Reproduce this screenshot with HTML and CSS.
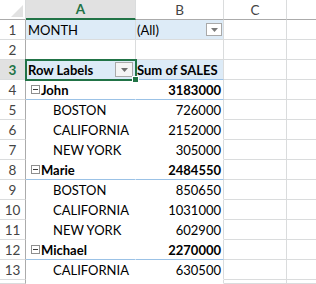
FILE: index.html
```html
<!DOCTYPE html>
<html lang="en">
<head>
    <meta charset="UTF-8">
    <meta name="viewport" content="width=device-width, initial-scale=1.0">
    <title>Pivot Table - Sales by Month</title>
    <link rel="stylesheet" href="styles.css">
</head>
<body>
    <div class="sheet">
        <!-- column headers -->
        <div class="cell corner"><span class="tri"></span></div>
        <div class="cell ch sel">A</div>
        <div class="cell ch">B</div>
        <div class="cell ch">C</div>
        <div class="cell ch last"></div>

        <!-- row 1: report filter -->
        <div class="cell rh">1</div>
        <div class="cell pv-head">MONTH</div>
        <div class="cell pv-head colb">(All)
            <span class="dd small"><svg width="7" height="4" viewBox="0 0 7 4"><path d="M0 0h7L3.5 4z" fill="#7a7a7a"/></svg></span>
        </div>
        <div class="cell"></div>
        <div class="cell last"></div>

        <!-- row 2 -->
        <div class="cell rh">2</div>
        <div class="cell"></div>
        <div class="cell"></div>
        <div class="cell"></div>
        <div class="cell last"></div>

        <!-- row 3: pivot header -->
        <div class="cell rh rh-sel">3</div>
        <div class="cell pv-head pv-title active"><b>Row Labels</b>
            <span class="dd"><svg width="7" height="4" viewBox="0 0 7 4"><path d="M0 0h7L3.5 4z" fill="#6d6d6d"/></svg></span>
        </div>
        <div class="cell pv-head pv-title colb"><b>Sum of SALES</b></div>
        <div class="cell"></div>
        <div class="cell last"></div>

        <!-- John -->
        <div class="cell rh">4</div>
        <div class="cell pv-a sub"><span class="tog"><svg width="9" height="9" viewBox="0 0 9 9"><rect x="0.5" y="0.5" width="8" height="8" fill="#fff" stroke="#8f8f8f"/><path d="M2 4.5h5" stroke="#3a3a3a"/></svg></span><b>John</b></div>
        <div class="cell pv-b sub num"><b>3183000</b></div>
        <div class="cell"></div>
        <div class="cell last"></div>

        <div class="cell rh">5</div>
        <div class="cell pv-a child">BOSTON</div>
        <div class="cell pv-b num">726000</div>
        <div class="cell"></div>
        <div class="cell last"></div>

        <div class="cell rh">6</div>
        <div class="cell pv-a child">CALIFORNIA</div>
        <div class="cell pv-b num">2152000</div>
        <div class="cell"></div>
        <div class="cell last"></div>

        <div class="cell rh">7</div>
        <div class="cell pv-a child">NEW YORK</div>
        <div class="cell pv-b num">305000</div>
        <div class="cell"></div>
        <div class="cell last"></div>

        <!-- Marie -->
        <div class="cell rh">8</div>
        <div class="cell pv-a sub"><span class="tog"><svg width="9" height="9" viewBox="0 0 9 9"><rect x="0.5" y="0.5" width="8" height="8" fill="#fff" stroke="#8f8f8f"/><path d="M2 4.5h5" stroke="#3a3a3a"/></svg></span><b>Marie</b></div>
        <div class="cell pv-b sub num"><b>2484550</b></div>
        <div class="cell"></div>
        <div class="cell last"></div>

        <div class="cell rh">9</div>
        <div class="cell pv-a child">BOSTON</div>
        <div class="cell pv-b num">850650</div>
        <div class="cell"></div>
        <div class="cell last"></div>

        <div class="cell rh">10</div>
        <div class="cell pv-a child">CALIFORNIA</div>
        <div class="cell pv-b num">1031000</div>
        <div class="cell"></div>
        <div class="cell last"></div>

        <div class="cell rh">11</div>
        <div class="cell pv-a child">NEW YORK</div>
        <div class="cell pv-b num">602900</div>
        <div class="cell"></div>
        <div class="cell last"></div>

        <!-- Michael -->
        <div class="cell rh">12</div>
        <div class="cell pv-a sub"><span class="tog"><svg width="9" height="9" viewBox="0 0 9 9"><rect x="0.5" y="0.5" width="8" height="8" fill="#fff" stroke="#8f8f8f"/><path d="M2 4.5h5" stroke="#3a3a3a"/></svg></span><b>Michael</b></div>
        <div class="cell pv-b sub num"><b>2270000</b></div>
        <div class="cell"></div>
        <div class="cell last"></div>

        <div class="cell rh">13</div>
        <div class="cell pv-a child">CALIFORNIA</div>
        <div class="cell pv-b num">630500</div>
        <div class="cell"></div>
        <div class="cell last"></div>

        <!-- top sliver of row 14 -->
        <div class="cell rh"></div>
        <div class="cell pv-a"></div>
        <div class="cell pv-b"></div>
        <div class="cell"></div>
        <div class="cell last"></div>
    </div>
</body>
</html>
```

FILE: styles.css
```css
body {
    margin: 0;
    background-color: #fff;
    font-family: Lato, "Open Sans", sans-serif;
    font-size: 13px;
    color: #000;
    overflow: hidden;
}

.sheet {
    display: grid;
    grid-template-columns: 26px 110px 88px 63px 1fr;
    grid-template-rows: repeat(14, 20px) 4px;
    width: 316px;
    height: 284px;
}

.cell {
    box-sizing: border-box;
    border-right: 1px solid #dadcdd;
    border-bottom: 1px solid #dadcdd;
    display: flex;
    align-items: center;
    padding: 0 2px;
    white-space: nowrap;
    overflow: hidden;
}

.cell.last {
    border-right: none;
}

/* headers */
.corner {
    position: relative;
    border-bottom-color: #ababab;
}

.corner .tri {
    position: absolute;
    right: 2px;
    bottom: 2px;
    width: 0;
    height: 0;
    border-left: 12px solid transparent;
    border-bottom: 12px solid #e2e2e2;
}

.ch {
    justify-content: center;
    color: #444;
    font-size: 13.5px;
    border-bottom-color: #ababab;
}

.ch.sel {
    background-color: #e1e1e1;
    color: #217346;
    font-weight: bold;
    border-bottom: 2px solid #217346;
}

.rh {
    justify-content: center;
    color: #444;
    font-size: 13.5px;
    border-right-color: #ababab;
}

.rh-sel {
    background-color: #e1e1e1;
    color: #217346;
    font-weight: bold;
}

/* pivot table */
.pv-head {
    background-color: #ddebf7;
    justify-content: space-between;
}

.colb {
    padding-left: 1px;
}

.pv-title {
    border-bottom-color: #9bc2e6;
}

.active {
    position: relative;
    z-index: 1;
    overflow: visible;
    outline: 2px solid #217346;
    outline-offset: -1px;
}

.active::after {
    content: "";
    position: absolute;
    right: -4px;
    bottom: -4px;
    width: 5px;
    height: 5px;
    background-color: #217346;
    border: 1px solid #fff;
}

.dd {
    box-sizing: border-box;
    width: 18px;
    height: 15px;
    border: 1px solid #a9a9a9;
    background-color: #f4f4f4;
    display: flex;
    align-items: center;
    justify-content: center;
}

.dd.small {
    width: 16px;
    height: 13px;
    background-color: #fff;
    margin-right: -1px;
}

.pv-a {
    border-right-color: #fff;
    border-bottom-color: #fff;
}

.pv-b {
    border-bottom-color: #fff;
}

.pv-a.sub,
.pv-b.sub {
    border-bottom-color: #9bc2e6;
}

.tog {
    display: flex;
    margin: 0 1px 0 3px;
}

.child {
    padding-left: 27px;
}

.num {
    justify-content: flex-end;
}
```
